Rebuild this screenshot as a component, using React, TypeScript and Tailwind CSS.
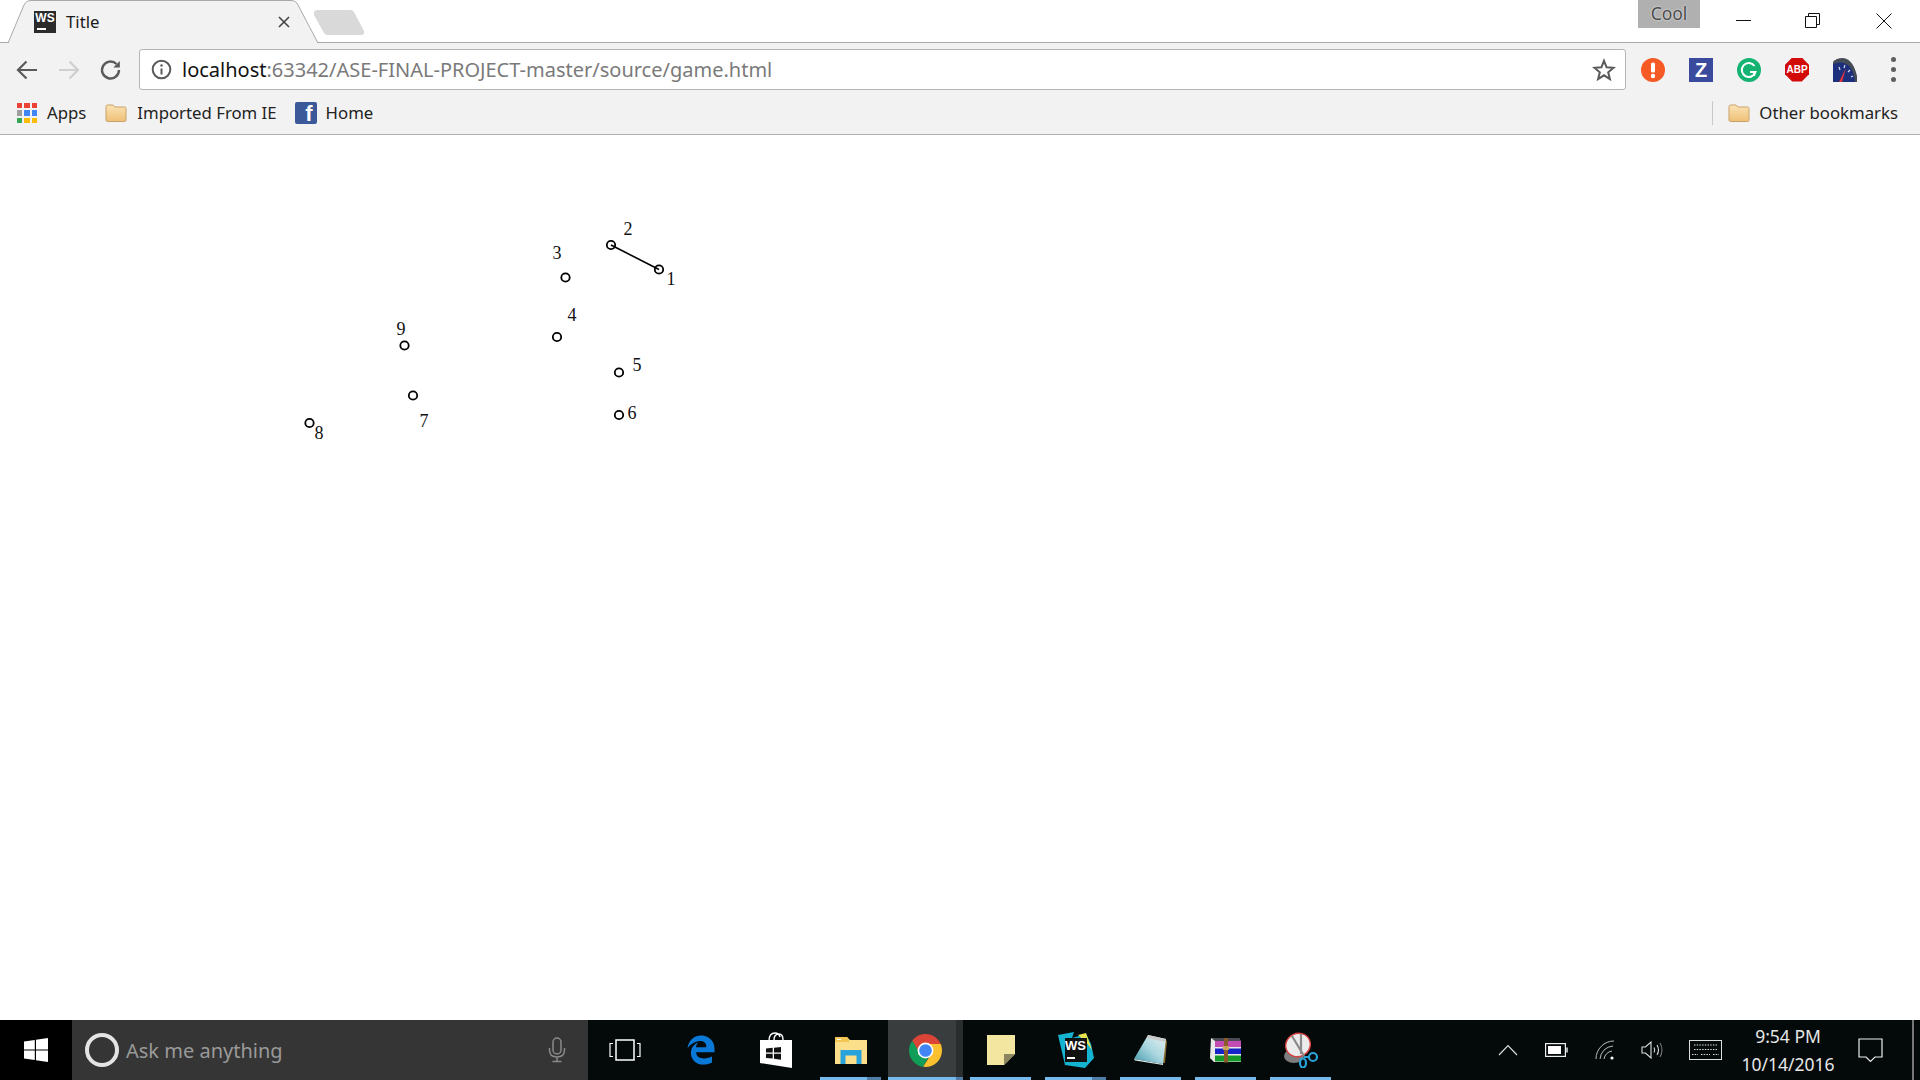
import React from 'react';
import { FaEdgeLegacy } from 'react-icons/fa';

const uiFont = 'font-["Noto_Sans",sans-serif]';

const dots = [
  { n: '1', x: 659, y: 269.5, lx: 671, ly: 285 },
  { n: '2', x: 611, y: 245, lx: 628, ly: 235 },
  { n: '3', x: 565.5, y: 277.5, lx: 557, ly: 259 },
  { n: '4', x: 557, y: 337, lx: 572, ly: 321 },
  { n: '5', x: 619, y: 372.5, lx: 637, ly: 371 },
  { n: '6', x: 619, y: 415, lx: 632, ly: 419 },
  { n: '7', x: 413, y: 395.5, lx: 424, ly: 427 },
  { n: '8', x: 309.5, y: 423, lx: 319, ly: 439 },
  { n: '9', x: 404.5, y: 345.5, lx: 401, ly: 335 },
];

const Folder = () => (
  <svg width="22" height="20" viewBox="0 0 22 20">
    <defs>
      <linearGradient id="fold" x1="0" y1="0" x2="0" y2="1">
        <stop offset="0" stopColor="#fbe3b4" />
        <stop offset="1" stopColor="#efc078" />
      </linearGradient>
    </defs>
    <path d="M1 3.5 Q1 2 2.5 2 H8 L10 4 H19.5 Q21 4 21 5.5 V17 Q21 18.5 19.5 18.5 H2.5 Q1 18.5 1 17 Z" fill="url(#fold)" stroke="#c9a26a" />
  </svg>
);

const AppsGrid = () => {
  const colors = ['#ea4335', '#ea4335', '#ea4335', '#9e9e9e', '#4285f4', '#4285f4', '#34a853', '#fbbc05', '#fbbc05'];
  return (
    <div className="grid grid-cols-3 gap-[2px] w-5 h-5">
      {colors.map((c, i) => (
        <div key={i} style={{ backgroundColor: c }} />
      ))}
    </div>
  );
};

const TaskSlot = ({ children, open, multi, active }: { children?: React.ReactNode; open?: boolean; multi?: boolean; active?: boolean }) => (
  <div className={`relative w-[75px] h-full flex items-center justify-center ${active ? 'bg-[#393d3d]' : ''}`}>
    {active && <div className="absolute right-0 top-0 h-full w-[7px] bg-[#2a2d2d]" />}
    <div className="relative flex">{children}</div>
    {open && (
      <div className={`absolute bottom-0 h-[3px] bg-[#76b9ed] ${active ? 'left-0 right-0' : 'left-[7px] right-[7px]'}`}>
        {multi && <div className="absolute right-0 top-0 h-full w-[14px] bg-[#4f7ea6]" />}
        {active && <div className="absolute right-0 top-0 h-full w-[7px] bg-[#4f7ea6]" />}
      </div>
    )}
  </div>
);

export default function App() {
  return (
    <div className={`w-[1920px] h-[1080px] overflow-hidden flex flex-col bg-white ${uiFont}`}>
      {/* tab strip */}
      <div className="relative h-[43px] shrink-0 flex bg-white border-b border-[#a9a9a9]">
        <svg className="absolute left-0 top-0" width="380" height="43" viewBox="0 0 380 43">
          <path d="M8 43 L24 5 Q26 0.5 31 0.5 H291 Q296 0.5 298 5 L318 43 Z" fill="#f2f2f2" stroke="#a9a9a9" />
          <path d="M314 13 Q314 10 318 10 H350 Q353 10 354 12 L364 31 Q365 35 361 35 H328 Q325 35 324 33 L314 15 Z" fill="#d9d9d9" />
          <path d="M9 42.5 H317" stroke="#f2f2f2" />
        </svg>
        <div className="relative ml-[34px] mt-[11px] w-[22px] h-[22px] bg-[#2b2b2b] flex flex-col items-center">
          <span className='text-white text-[12px] font-bold leading-[13px] mt-[1px] font-["Liberation_Sans",sans-serif]'>WS</span>
          <div className="absolute left-[3px] bottom-[3px] w-[9px] h-[2px] bg-white" />
        </div>
        <span className="relative ml-[10px] mt-[9px] text-[16.75px] leading-[26px] text-[#1a1a1a]">Title</span>
        <svg className="absolute left-[278px] top-[16px]" width="12" height="12" viewBox="0 0 12 12">
          <path d="M1 1 L11 11 M11 1 L1 11" stroke="#444" strokeWidth="1.6" />
        </svg>

        <div className="ml-auto flex items-start">
          <div className='w-[62px] h-[28px] bg-[#b0b0b0] text-center text-[17.5px] leading-[26px] text-[#4a4a4a] [text-shadow:0_0_2px_#fff]'>Cool</div>
          <div className="w-[220px] h-[42px] flex items-center pl-[36px]">
            <div className="w-[69px]">
              <svg className="block" width="16" height="16" viewBox="0 0 16 16"><path d="M0 7.5 H15" stroke="#111" /></svg>
            </div>
            <div className="w-[71px]">
              <svg className="block" width="16" height="16" viewBox="0 0 16 16" fill="none" stroke="#111">
                <path d="M0.5 3.5 H11.5 V14.5 H0.5 Z" />
                <path d="M3.5 3.5 V0.5 H14.5 V11.5 H11.5" />
              </svg>
            </div>
            <div className="w-[16px]">
              <svg className="block" width="16" height="16" viewBox="0 0 16 16"><path d="M0.5 0.5 L15.5 15.5 M15.5 0.5 L0.5 15.5" stroke="#111" /></svg>
            </div>
          </div>
        </div>
      </div>

      {/* toolbar */}
      <div className="h-[52px] pt-[1px] shrink-0 bg-[#f2f2f2] flex items-center">
        <div className="w-[139px] flex items-center pl-[15px] gap-[18px]">
          <svg width="24" height="24" viewBox="0 0 24 24" fill="none" stroke="#5a5a5a" strokeWidth="2.2">
            <path d="M22 12 H3 M11.5 3.5 L3 12 L11.5 20.5" />
          </svg>
          <svg width="24" height="24" viewBox="0 0 24 24" fill="none" stroke="#cfcfcf" strokeWidth="2.2">
            <path d="M2 12 H21 M12.5 3.5 L21 12 L12.5 20.5" />
          </svg>
          <svg width="24" height="24" viewBox="0 0 24 24" fill="none" stroke="#5a5a5a" strokeWidth="2.4">
            <path d="M20 12 A8.5 8.5 0 1 1 17.5 6" />
            <path d="M20.8 3 V9.5 H14.3 Z" fill="#5a5a5a" stroke="none" />
          </svg>
        </div>
        <div className="w-[1487px] h-[41px] bg-white border border-[#b5b5b5] rounded-[3px] flex items-center">
          <svg className="ml-[11px]" width="21" height="21" viewBox="0 0 21 21" fill="none">
            <circle cx="10.5" cy="10.5" r="8.8" stroke="#5a5a5a" strokeWidth="2" />
            <path d="M10.5 9.5 V15.5" stroke="#5a5a5a" strokeWidth="2" />
            <circle cx="10.5" cy="6.5" r="1.2" fill="#5a5a5a" />
          </svg>
          <span className="ml-[10px] text-[20px] leading-[26px] text-[#7a7a7a] whitespace-nowrap">
            <span className="text-[#111]">localhost</span>:63342/ASE-FINAL-PROJECT-master/source/game.html
          </span>
          <svg className="ml-auto mr-[9px]" width="24" height="24" viewBox="0 0 24 24" fill="none" stroke="#5a5a5a" strokeWidth="2">
            <path d="M12 2.8 L14.6 9.3 L21.6 9.8 L16.2 14.3 L17.9 21 L12 17.3 L6.1 21 L7.8 14.3 L2.4 9.8 L9.4 9.3 Z" />
          </svg>
        </div>
        <div className="flex-1 flex items-center pl-[15px]">
          <div className="w-[48px] flex">
            <svg width="24" height="24" viewBox="0 0 24 24">
              <circle cx="12" cy="12" r="12" fill="#f55a25" />
              <rect x="10" y="4.5" width="4" height="10" rx="1.5" fill="#fff" />
              <circle cx="12" cy="18" r="2.2" fill="#fff" />
            </svg>
          </div>
          <div className="w-[48px] flex">
            <div className='w-6 h-6 bg-[#3a4a9c] flex items-center justify-center text-white text-[20px] font-bold leading-none font-["Liberation_Sans",sans-serif]'>Z</div>
          </div>
          <div className="w-[48px] flex">
            <svg width="24" height="24" viewBox="0 0 24 24" fill="none">
              <circle cx="12" cy="12" r="12" fill="#15b372" />
              <path d="M17.5 8 A7 7 0 1 0 18.5 14 H13" stroke="#fff" strokeWidth="2" />
              <path d="M17.2 13.5 V18" stroke="#fff" strokeWidth="2" />
            </svg>
          </div>
          <div className="w-[48px] flex">
            <div className='w-6 h-6 bg-[#d30a0a] [clip-path:polygon(30%_0,70%_0,100%_30%,100%_70%,70%_100%,30%_100%,0_70%,0_30%)] flex items-center justify-center text-white text-[10px] font-bold leading-none font-["Liberation_Sans",sans-serif]'>ABP</div>
          </div>
          <div className="w-[48px] flex">
            <svg width="24" height="24" viewBox="0 0 24 24">
              <path d="M0 24 V4 Q3 0 10 0 Q20 1 24 18 V24 Z" fill="#454c55" />
              <path d="M0 24 V6 Q10 2 16 8 Q21 13 22 24 Z" fill="#1c2f7d" />
              <path d="M6 24 L13 10 L9 24 Z" fill="#e8323c" />
              <path d="M6 9 L7 12 M12 7 L11 10 M17 12 L15 14 M20 18 L18 19" stroke="#d5dcea" strokeWidth="1.2" />
            </svg>
          </div>
          <div className="w-[24px] flex justify-center">
            <div className="flex flex-col gap-[5px]">
              <div className="w-[5px] h-[5px] rounded-full bg-[#5f5f5f]" />
              <div className="w-[5px] h-[5px] rounded-full bg-[#5f5f5f]" />
              <div className="w-[5px] h-[5px] rounded-full bg-[#5f5f5f]" />
            </div>
          </div>
        </div>
      </div>

      {/* bookmarks bar */}
      <div className="h-[40px] shrink-0 bg-[#f2f2f2] border-b border-[#b0b0b0] flex items-center pl-[17px] pr-[22px] text-[16.75px] text-[#222] pb-[3px] whitespace-nowrap">
        <AppsGrid />
        <span className="ml-[10px]">Apps</span>
        <div className="ml-[19px]"><Folder /></div>
        <span className="ml-[10px]">Imported From IE</span>
        <div className='ml-[18px] w-[22px] h-[22px] bg-[#3b5998] rounded-[2px] text-white text-[22px] font-bold leading-[24px] text-right pr-[4px] font-["Liberation_Sans",sans-serif]'>f</div>
        <span className="ml-[9px]">Home</span>
        <div className="ml-auto w-px h-[24px] bg-[#c8c8c8]" />
        <div className="ml-[15px]"><Folder /></div>
        <span className="ml-[9px]">Other bookmarks</span>
      </div>

      {/* page */}
      <div className="relative flex-1 bg-white">
        <svg className="absolute left-0 top-[-135px]" width="1920" height="1020" viewBox="0 0 1920 1020">
          <line x1="611" y1="245" x2="659" y2="269.5" stroke="#000" strokeWidth="1.6" />
          {dots.map((d) => (
            <g key={d.n}>
              <circle cx={d.x} cy={d.y} r="4.2" fill="none" stroke="#000" strokeWidth="1.8" />
              <text x={d.lx} y={d.ly} textAnchor="middle" fontSize="18" fontFamily="'Liberation Serif', serif" fill="#111">{d.n}</text>
            </g>
          ))}
        </svg>
      </div>

      {/* taskbar */}
      <div className="h-[60px] shrink-0 bg-[#040a0a] flex items-stretch">
        <div className="w-[72px] bg-black flex items-center justify-center">
          <svg width="24" height="24" viewBox="0 0 24 24" fill="#fff">
            <path d="M0 3.6 L10.8 2 V11.4 H0 Z M12 1.8 L24 0 V11.4 H12 Z M0 12.6 H10.8 V22 L0 20.4 Z M12 12.6 H24 V24 L12 22.2 Z" />
          </svg>
        </div>
        <div className="w-[516px] bg-[#353535] flex items-center pl-[13px] pr-[22px]">
          <div className="w-[34px] h-[34px] rounded-full border-[4px] border-[#e4e4e4] bg-transparent" />
          <span className="ml-[7px] mt-[2px] text-[20px] text-[#9a9a9a]">Ask me anything</span>
          <svg className="ml-auto" width="18" height="26" viewBox="0 0 18 26" fill="none" stroke="#8a8a8a" strokeWidth="1.5">
            <rect x="5" y="1" width="8" height="16" rx="4" />
            <path d="M1.5 11 V13 Q1.5 20 9 20 Q16.5 20 16.5 13 V11 M9 20 V24 M4.5 24.5 H13.5" />
          </svg>
        </div>
        <TaskSlot>
          <svg className="-ml-[2px]" width="32" height="24" viewBox="0 0 32 24" fill="none" stroke="#fff" strokeWidth="1.5">
            <rect x="7" y="2" width="18" height="20" />
            <path d="M4 5.5 H1 V18.5 H4 M28 5.5 H31 V18.5 H28" strokeWidth="1.2" />
          </svg>
        </TaskSlot>
        <TaskSlot>
          <FaEdgeLegacy className="w-[30px] h-[30px] text-[#0a78d7]" />
        </TaskSlot>
        <TaskSlot>
          <svg width="34" height="36" viewBox="0 0 34 36">
            <path d="M10 9 Q10 1 16 1 Q20 1 21 5 M15 8 Q15 2 20 2 Q24 2 24 8" fill="none" stroke="#fff" strokeWidth="1.4" />
            <path d="M1 8 H33 V36 L1 31 Z" fill="#fff" />
            <path d="M7 16.5 L13.7 15.8 V20.5 H7 Z M15 15.7 L22 15 V20.5 H15 Z M7 21.8 H13.7 V26.6 L7 26 Z M15 21.8 H22 V27.7 L15 26.8 Z" fill="#111" />
          </svg>
        </TaskSlot>
        <TaskSlot open multi>
          <svg width="32" height="27" viewBox="0 0 32 27">
            <path d="M0 0 H12 L15 3 H32 V27 H0 Z" fill="#fcdf8a" />
            <path d="M0 0 H12 L14 3 V5 H0 Z" fill="#f3c552" />
            <path d="M2 2 H6 V3 H2 Z" fill="#fff" />
            <path d="M5.5 27 V13 H26.5 V27 H21.5 V18.5 H10.5 V27 Z" fill="#29a3dc" />
          </svg>
        </TaskSlot>
        <TaskSlot open active>
          <svg width="33" height="33" viewBox="4 4 40 40">
            <path d="M24 4C17.4 4 11.5 7.2 7.9 12.2L14.9 24.3C15.4 19.6 19.3 16 24 16H42.5C39.3 8.9 32.2 4 24 4Z" fill="#db4437" />
            <path d="M7.9 12.2C5.5 15.5 4 19.6 4 24C4 34.1 11.4 42.4 21.1 43.8L28 31.4C26.8 31.8 25.4 32 24 32C20 32 16.6 29.1 15.9 25.3Z" fill="#0f9d58" />
            <path d="M42.5 16H24C28.4 16 32 19.6 32 24C32 25.6 31.5 27.1 30.7 28.4L21.1 43.8C22 43.9 23 44 24 44C35 44 44 35 44 24C44 21.2 43.4 18.4 42.5 16Z" fill="#fbc02d" />
            <circle cx="24" cy="24" r="9.6" fill="#fff" />
            <circle cx="24" cy="24" r="7.6" fill="#4285f4" />
          </svg>
        </TaskSlot>
        <TaskSlot open>
          <svg width="28" height="30" viewBox="0 0 28 30">
            <path d="M0 0 H28 V19 L17 30 H0 Z" fill="#f3e6a0" />
            <path d="M28 19 L17 30 V19 Z" fill="#8c8660" />
          </svg>
        </TaskSlot>
        <TaskSlot open multi>
          <div className="relative w-[36px] h-[36px]">
            <svg className="absolute inset-0" width="36" height="36" viewBox="0 0 36 36">
              <path d="M0 3 L16 0 L14 6 L28 2 L33 12 L36 26 L27 36 L7 33 Z" fill="#14b4d0" />
              <path d="M20 3 L28 1 L34 18 L28 10 Z" fill="#e9e24f" />
            </svg>
            <div className='absolute left-[7px] top-[6px] w-[22px] h-[24px] bg-[#111] text-white text-[13px] font-bold leading-[15px] text-center font-["Liberation_Sans",sans-serif]'>WS</div>
            <div className="absolute left-[9px] top-[25px] w-[8px] h-[2px] bg-white" />
          </div>
        </TaskSlot>
        <TaskSlot open>
          <svg width="33" height="30" viewBox="0 0 33 30">
            <defs>
              <linearGradient id="pad" x1="0" y1="1" x2="1" y2="0">
                <stop offset="0" stopColor="#3f97a8" />
                <stop offset="0.5" stopColor="#a9d6df" />
                <stop offset="1" stopColor="#e8f1f3" />
              </linearGradient>
            </defs>
            <path d="M31 5 L33 6 L31 28 L28 28 Z" fill="#8a6a2c" />
            <path d="M14 0 L32 4 L29 29 L0 24 Z" fill="url(#pad)" />
            <path d="M14 0 L32 4 L31.5 7 L13 3 Z" fill="#c9c9c9" />
            <path d="M0 24 L29 29 L29 30 L1 25.5 Z" fill="#ddeef1" />
          </svg>
        </TaskSlot>
        <TaskSlot open>
          <svg width="33" height="26" viewBox="0 0 33 26">
            <path d="M2 1 H30 L32 5 V25 H5 L1 21 Z" fill="#e8e8e8" />
            <path d="M6 4 H32 V10 H6 Z" fill="#c44bb4" />
            <path d="M6 11.5 H32 V17 H6 Z" fill="#1424c8" />
            <path d="M6 18.5 H32 V24.5 H6 Z" fill="#159a2a" />
            <path d="M2 1 H30 L32 4 H6 Z" fill="#4b4b55" />
            <rect x="15" y="1" width="4" height="24.5" fill="#8a5a2b" />
            <rect x="14" y="9" width="6" height="4" fill="#c9a15c" />
          </svg>
        </TaskSlot>
        <TaskSlot open>
          <svg width="36" height="36" viewBox="0 0 36 36" fill="none">
            <ellipse cx="11" cy="24" rx="10" ry="7" fill="#7d7d7d" />
            <ellipse cx="15" cy="13" rx="12.5" ry="11.5" fill="#ececec" stroke="#d94040" strokeWidth="1.4" transform="rotate(-25 15 13)" />
            <path d="M9 4 L21 24 M18 2 L18 22" stroke="#8a8a8a" strokeWidth="2.2" />
            <circle cx="30" cy="25" r="4" stroke="#29a3dc" strokeWidth="2.2" />
            <ellipse cx="20" cy="31" rx="3" ry="4.5" stroke="#29a3dc" strokeWidth="2.2" />
            <path d="M21 25 L26 25" stroke="#29a3dc" strokeWidth="2" />
          </svg>
        </TaskSlot>

        {/* tray */}
        <div className="flex-1 flex items-center">
          <svg className="ml-[160px]" width="20" height="12" viewBox="0 0 20 12" fill="none" stroke="#ddd" strokeWidth="1.2">
            <path d="M1 11 L10 1.5 L19 11" />
          </svg>
          <svg className="ml-[27px]" width="23" height="14" viewBox="0 0 23 14">
            <rect x="0.6" y="0.6" width="19.8" height="12.8" fill="none" stroke="#eee" strokeWidth="1.2" />
            <rect x="3" y="3" width="13" height="8" fill="#fff" />
            <rect x="21" y="4.5" width="2" height="5" fill="#aaa" />
          </svg>
          <svg className="ml-[27px]" width="20" height="20" viewBox="0 0 20 20" fill="none" stroke="#bbb" strokeWidth="1">
            <path d="M1 19 A18 18 0 0 1 19 1 M5 19 A14 14 0 0 1 18 6 M9 19 A10 10 0 0 1 17 11" />
            <circle cx="17" cy="18" r="1.6" fill="#fff" stroke="none" />
          </svg>
          <svg className="ml-[26px]" width="23" height="18" viewBox="0 0 23 18" fill="none" stroke="#ddd" strokeWidth="1.1">
            <path d="M1 6 H4.5 L10 1 V17 L4.5 12 H1 Z" />
            <path d="M13 6.5 Q14.5 9 13 11.5 M16 4 Q19 9 16 14" />
            <path d="M19 2 Q23 9 19 16" stroke="#777" />
          </svg>
          <svg className="ml-[25px]" width="33" height="20" viewBox="0 0 33 20" fill="none" stroke="#ddd">
            <rect x="0.5" y="0.5" width="32" height="19" />
            <path d="M5 5 H28 M5 9.5 H28 M3 14.5 H9 M12 14.5 H21 M24 14.5 H30" strokeDasharray="1.5 1.2" />
          </svg>
          <div className="ml-[16px] w-[100px] text-center text-[#e8e8e8] text-[17.5px] whitespace-nowrap">
            <div className="leading-[28px] -mt-[1px]">9:54 PM</div>
            <div className="leading-[28px]">10/14/2016</div>
          </div>
          <svg className="ml-[20px]" width="25" height="25" viewBox="0 0 25 25" fill="none" stroke="#eee" strokeWidth="1.2">
            <path d="M1 1 H24 V19 H17 L12.5 23.5 L8 19 H1 Z" />
          </svg>
          <div className="ml-auto mr-[6px] w-[2px] h-full bg-[#777]" />
        </div>
      </div>
    </div>
  );
}
